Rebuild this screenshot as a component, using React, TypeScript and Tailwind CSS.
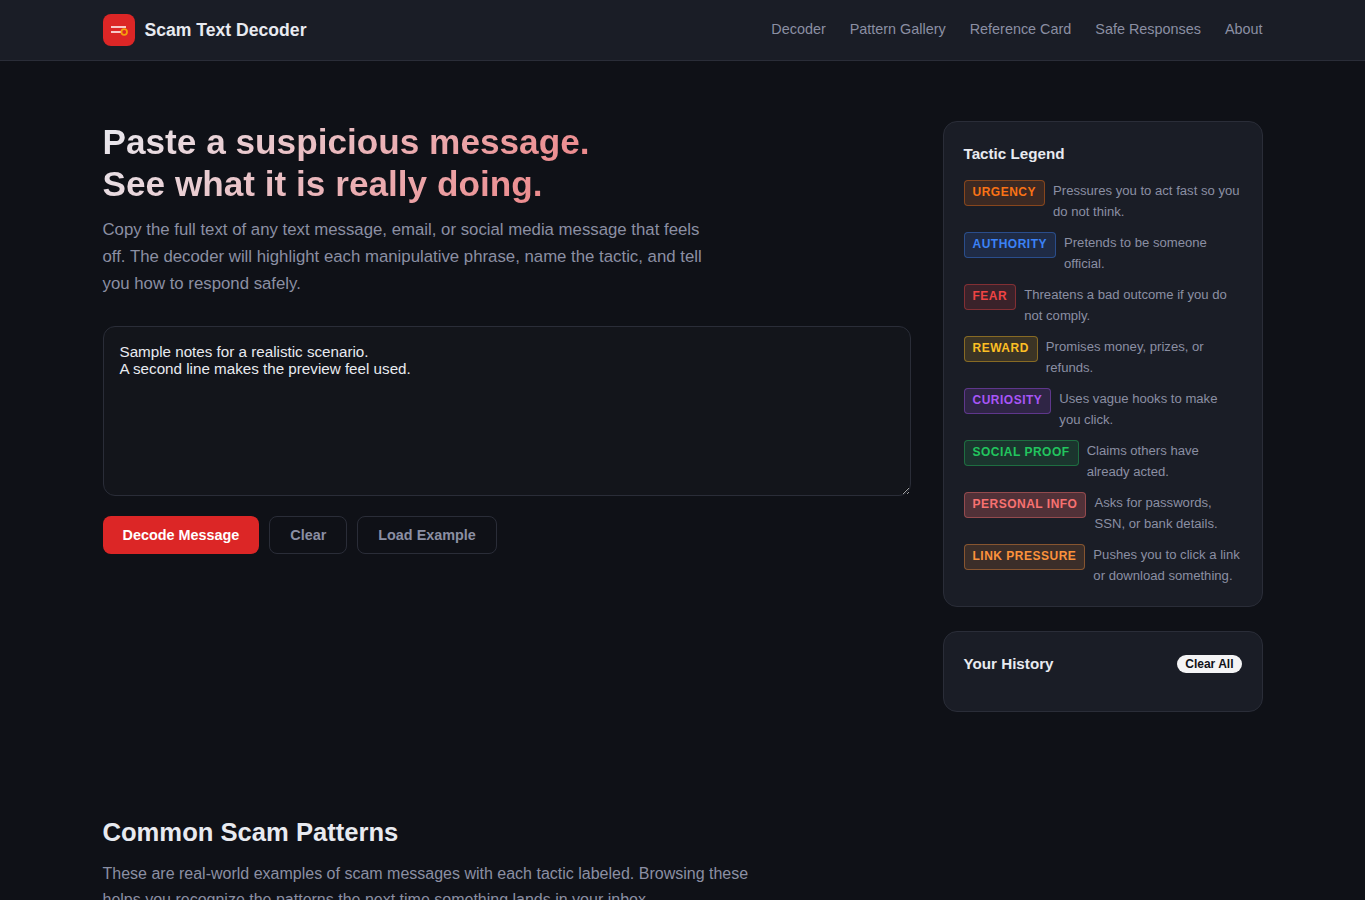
const navLinks = ['Decoder', 'Pattern Gallery', 'Reference Card', 'Safe Responses', 'About'];

const tactics = [
  { label: 'URGENCY', desc: 'Pressures you to act fast so you do not think.', tag: 'text-[#f97316] bg-[#f97316]/15 border-[#f97316]/40' },
  { label: 'AUTHORITY', desc: 'Pretends to be someone official.', tag: 'text-[#3b82f6] bg-[#3b82f6]/15 border-[#3b82f6]/40' },
  { label: 'FEAR', desc: 'Threatens a bad outcome if you do not comply.', tag: 'text-[#ef4444] bg-[#ef4444]/15 border-[#ef4444]/40' },
  { label: 'REWARD', desc: 'Promises money, prizes, or refunds.', tag: 'text-[#fbbf24] bg-[#fbbf24]/15 border-[#fbbf24]/40' },
  { label: 'CURIOSITY', desc: 'Uses vague hooks to make you click.', tag: 'text-[#a855f7] bg-[#a855f7]/15 border-[#a855f7]/40' },
  { label: 'SOCIAL PROOF', desc: 'Claims others have already acted.', tag: 'text-[#22c55e] bg-[#22c55e]/15 border-[#22c55e]/40' },
  { label: 'PERSONAL INFO', desc: 'Asks for passwords, SSN, or bank details.', tag: 'text-[#f87171] bg-[#f87171]/25 border-[#f87171]/40' },
  { label: 'LINK PRESSURE', desc: 'Pushes you to click a link or download something.', tag: 'text-[#fb923c] bg-[#fb923c]/15 border-[#fb923c]/40' },
];

function Logo() {
  return (
    <div className="flex h-8 w-8 items-center justify-center rounded-lg bg-[#dc2626]">
      <svg width="20" height="20" viewBox="0 0 20 20" fill="none">
        <path d="M2 7h15M2 12h10" stroke="#fff" strokeWidth="1.6" />
        <circle cx="15.2" cy="12" r="2.8" stroke="#f59e0b" strokeWidth="1.8" />
      </svg>
    </div>
  );
}

export default function App() {
  return (
    <div className="min-h-screen bg-[#0f1117] pb-16 font-['Liberation_Sans',Arial,sans-serif] leading-[1.6] text-[#e8eaf0]">
      <header className="border-b border-[#2a2d38] bg-[#1a1d26]">
        <div className="mx-auto flex h-[60px] max-w-[1160px] items-center justify-between">
          <div className="flex items-center gap-2.5">
            <Logo />
            <span className="text-[17.6px] font-bold">Scam Text Decoder</span>
          </div>
          <nav className="flex items-center gap-6">
            {navLinks.map((link) => (
              <a key={link} className="text-[14.4px] text-[#8b8fa3]">
                {link}
              </a>
            ))}
          </nav>
        </div>
      </header>

      <main className="mx-auto max-w-[1160px] pt-[60px]">
        <div className="grid grid-cols-[1fr_320px] items-start gap-8">
          <section>
            <h1 className="mb-3 bg-[linear-gradient(135deg,#e8eaf0,#ef4444)] bg-clip-text text-[35.2px] leading-[1.2] font-bold text-transparent">
              Paste a suspicious message.
              <br />
              See what it is really doing.
            </h1>
            <p className="mb-7 max-w-[620px] text-[16.8px] text-[#8b8fa3]">
              Copy the full text of any text message, email, or social media message that feels off. The decoder will
              highlight each manipulative phrase, name the tactic, and tell you how to respond safely.
            </p>
            <textarea
              className="block h-[170px] w-full rounded-[12px] border border-[#2a2d38] bg-[#13151b] p-4 text-[15.2px] leading-[17px] text-[#e8eaf0] outline-none"
              defaultValue={'Sample notes for a realistic scenario.\nA second line makes the preview feel used.'}
            />
            <div className="mt-5 flex gap-2.5">
              <button className="h-[38px] rounded-lg bg-[#dc2626] px-5 text-[14.4px] font-bold text-white">
                Decode Message
              </button>
              <button className="h-[38px] rounded-lg border border-[#2a2d38] px-5 text-[14.4px] font-bold text-[#8b8fa3]">
                Clear
              </button>
              <button className="h-[38px] rounded-lg border border-[#2a2d38] px-5 text-[14.4px] font-bold text-[#8b8fa3]">
                Load Example
              </button>
            </div>
          </section>

          <aside className="flex flex-col gap-6">
            <div className="rounded-[14px] border border-[#2a2d38] bg-[#1a1d26] p-5">
              <h3 className="mb-[14px] text-[15.2px] font-bold">Tactic Legend</h3>
              <div className="flex flex-col gap-2.5">
                {tactics.map((t) => (
                  <div key={t.label} className="flex items-start gap-2">
                    <span className={`shrink-0 rounded-[4px] border px-2 pt-[1.4px] pb-[3.4px] text-[12px] font-bold tracking-[0.5px] whitespace-nowrap ${t.tag}`}>
                      {t.label}
                    </span>
                    <span className="text-[13.12px] text-[#8b8fa3]">{t.desc}</span>
                  </div>
                ))}
              </div>
            </div>
            <div className="flex h-[81px] items-start justify-between rounded-[14px] border border-[#2a2d38] bg-[#1a1d26] px-5 pt-5">
              <h3 className="text-[15.2px] font-bold">Your History</h3>
              <button className="mt-[3px] rounded-full bg-[#f4f4f5] px-2 text-[12px] leading-[18px] font-bold text-[#0f1117]">
                Clear All
              </button>
            </div>
          </aside>
        </div>

        <section className="mt-[100px]">
          <h2 className="mb-2 text-[25.6px] font-bold">Common Scam Patterns</h2>
          <p className="max-w-[660px] text-[16px] text-[#8b8fa3]">
            These are real-world examples of scam messages with each tactic labeled. Browsing these helps you recognize
            the patterns the next time something lands in your inbox.
          </p>
        </section>
      </main>
    </div>
  );
}
